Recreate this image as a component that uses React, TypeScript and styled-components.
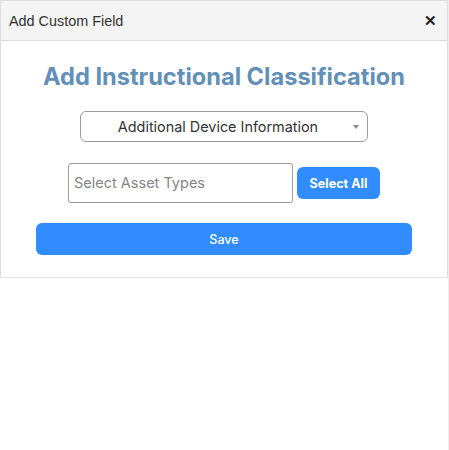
import styled, { createGlobalStyle } from "styled-components";

const GlobalStyle = createGlobalStyle`
  html, body {
    margin: 0;
    padding: 0;
    background: #fff;
  }
  * {
    box-sizing: border-box;
  }
`;

const Page = styled.div`
  width: 449px;
  height: 450px;
  border-right: 1px solid #eeeeee;
`;

const Dialog = styled.div`
  width: 448px;
  border: 1px solid #dddddd;
  border-bottom-color: #e4e4e4;
  background: #fff;
`;

const Header = styled.div`
  height: 40px;
  display: flex;
  align-items: center;
  justify-content: space-between;
  padding: 0 10px 0 8px;
  background: #f4f4f4;
  border-bottom: 1px solid #dddddd;
`;

const HeaderTitle = styled.span`
  font-family: "Liberation Sans", Arial, sans-serif;
  font-size: 14.4px;
  color: #333;
`;

const CloseButton = styled.button`
  border: 0;
  background: none;
  padding: 0;
  font-family: "Liberation Sans", Arial, sans-serif;
  font-size: 15px;
  font-weight: bold;
  color: #222;
  cursor: pointer;
`;

const Body = styled.div`
  display: flex;
  flex-direction: column;
  align-items: center;
  padding: 20px 35px 22px;
  font-family: Inter, "Noto Sans", sans-serif;
`;

const Heading = styled.h2`
  margin: 0;
  font-size: 23.6px;
  line-height: 31px;
  font-weight: 700;
  color: #6290b8;
`;

const SelectBox = styled.div`
  position: relative;
  margin-top: 19px;
  width: 288px;
  height: 31px;
  border: 1px solid #9a9a9a;
  border-radius: 6px;
  display: flex;
  align-items: center;
  justify-content: center;
  padding-right: 12px;
  font-size: 14.4px;
  color: #333;
`;

const Caret = styled.span`
  position: absolute;
  right: 8px;
  top: 13px;
  width: 0;
  height: 0;
  border-left: 3px solid transparent;
  border-right: 3px solid transparent;
  border-top: 4px solid #888;
`;

const AssetRow = styled.div`
  margin-top: 21px;
  display: flex;
  align-items: center;
  gap: 4px;
`;

const AssetInput = styled.input`
  width: 225px;
  height: 40px;
  border: 1px solid #9a9a9a;
  border-radius: 3px;
  padding: 0 5px 2px;
  font-family: Inter, "Noto Sans", sans-serif;
  font-size: 14.5px;
  color: #333;
  outline: none;
  &::placeholder {
    color: #858585;
  }
`;

const BlueButton = styled.button<{ $wide?: boolean }>`
  height: 32px;
  width: ${(p) => (p.$wide ? "100%" : "83px")};
  border: 0;
  border-radius: 6px;
  background: #308cff;
  color: #fff;
  font-family: Inter, "Noto Sans", sans-serif;
  font-size: 12.6px;
  font-weight: ${(p) => (p.$wide ? 500 : 700)};
  cursor: pointer;
`;

const SaveRow = styled.div`
  margin-top: 20px;
  width: 100%;
`;

export default function App() {
  return (
    <>
      <GlobalStyle />
      <Page>
        <Dialog>
          <Header>
            <HeaderTitle>Add Custom Field</HeaderTitle>
            <CloseButton>✕</CloseButton>
          </Header>
          <Body>
            <Heading>Add Instructional Classification</Heading>
            <SelectBox>
              Additional Device Information
              <Caret />
            </SelectBox>
            <AssetRow>
              <AssetInput placeholder="Select Asset Types" />
              <BlueButton>Select All</BlueButton>
            </AssetRow>
            <SaveRow>
              <BlueButton $wide>Save</BlueButton>
            </SaveRow>
          </Body>
        </Dialog>
      </Page>
    </>
  );
}
